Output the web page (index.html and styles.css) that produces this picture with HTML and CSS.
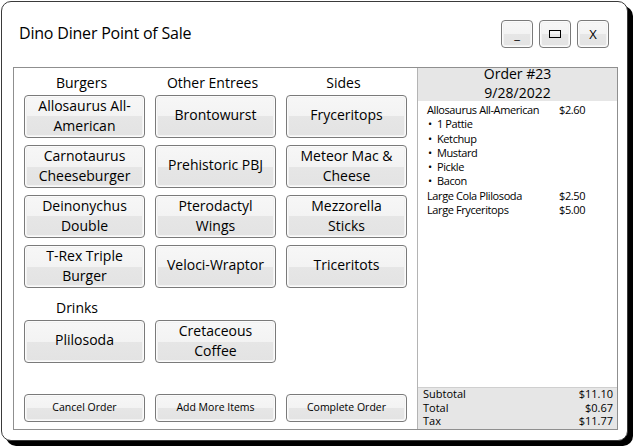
FILE: index.html
```html
<!DOCTYPE html>
<html>
<head>
<meta charset="utf-8">
<link rel="stylesheet" href="styles.css">
</head>
<body>
<div class="window">
  <div class="titlebar">
    <div class="title">Dino Diner Point of Sale</div>
    <div class="wbtns">
      <button class="btn wbtn">_</button>
      <button class="btn wbtn"><span class="max"></span></button>
      <button class="btn wbtn">X</button>
    </div>
  </div>
  <div class="panel">
    <div class="menu">
      <div class="grid">
        <div class="head">Burgers</div>
        <div class="head">Other Entrees</div>
        <div class="head">Sides</div>
        <button class="btn item">Allosaurus All-American</button>
        <button class="btn item">Brontowurst</button>
        <button class="btn item">Fryceritops</button>
        <button class="btn item">Carnotaurus Cheeseburger</button>
        <button class="btn item">Prehistoric PBJ</button>
        <button class="btn item">Meteor Mac &amp; Cheese</button>
        <button class="btn item">Deinonychus Double</button>
        <button class="btn item">Pterodactyl Wings</button>
        <button class="btn item">Mezzorella Sticks</button>
        <button class="btn item">T-Rex Triple Burger</button>
        <button class="btn item">Veloci-Wraptor</button>
        <button class="btn item">Triceritots</button>
        <div class="head drinks">Drinks</div>
        <div></div>
        <div></div>
        <button class="btn item">Plilosoda</button>
        <button class="btn item">Cretaceous Coffee</button>
      </div>
      <div class="actions">
        <button class="btn act">Cancel Order</button>
        <button class="btn act">Add More Items</button>
        <button class="btn act">Complete Order</button>
      </div>
    </div>
    <div class="order">
      <div class="ohead">
        <div class="oline first">Order #23</div>
        <div class="oline">9/28/2022</div>
      </div>
      <div class="items">
        <div class="line"><span>Allosaurus All-American</span><span>$2.60</span></div>
        <div class="line sub"><span>•</span><span>1 Pattie</span></div>
        <div class="line sub"><span>•</span><span>Ketchup</span></div>
        <div class="line sub"><span>•</span><span>Mustard</span></div>
        <div class="line sub"><span>•</span><span>Pickle</span></div>
        <div class="line sub"><span>•</span><span>Bacon</span></div>
        <div class="line"><span>Large Cola Plilosoda</span><span>$2.50</span></div>
        <div class="line"><span>Large Fryceritops</span><span>$5.00</span></div>
      </div>
      <div class="totals">
        <div class="trow first"><span>Subtotal</span><span>$11.10</span></div>
        <div class="trow"><span>Total</span><span>$0.67</span></div>
        <div class="trow"><span>Tax</span><span>$11.77</span></div>
      </div>
    </div>
  </div>
</div>
</body>
</html>
```

FILE: styles.css
```css
* { box-sizing: border-box; }
html, body { margin: 0; padding: 0; background: #fff; }
body {
  font-family: "Open Sans", "Noto Sans", sans-serif;
  color: #000;
  width: 635px;
  height: 447px;
  overflow: hidden;
}
.window {
  margin: 1px 0 0 1px;
  width: 627px;
  height: 440px;
  border: 1px solid #3a3a3a;
  border-radius: 10px;
  box-shadow: 5px 5px 0 #000;
  background: #fff;
  display: flex;
  flex-direction: column;
}
.titlebar {
  height: 65px;
  display: flex;
  align-items: center;
  justify-content: space-between;
  padding: 0 18px 2px 17px;
}
.title {
  font-size: 16px;
  letter-spacing: -0.2px;
  line-height: 20px;
  margin-top: -1px;
}
.wbtns {
  display: flex;
  gap: 6px;
}
.btn {
  font-family: inherit;
  color: #000;
  border: 1px solid #7a7a7a;
  border-radius: 4px;
  background: linear-gradient(#f7f7f7 0, #f3f3f3 50%, #e6e6e6 50%, #e3e3e3 100%);
  box-shadow: inset 0 0 0 1px #fbfbfb, inset 0 0 0 2px #f2f2f2;
  padding: 0;
  margin: 0;
}
.wbtn {
  width: 32px;
  height: 28px;
  font-size: 13px;
  display: flex;
  align-items: center;
  justify-content: center;
}
.max {
  display: block;
  width: 12px;
  height: 8px;
  border: 1px solid #000;
}
.panel {
  margin: 0 0 10px 11px;
  width: 605px;
  flex: 1;
  border: 1px solid #8f8f8f;
  display: flex;
}
.menu {
  width: 403px;
  padding-left: 10px;
  display: flex;
  flex-direction: column;
}
.grid {
  display: grid;
  grid-template-columns: repeat(3, 121px);
  column-gap: 10px;
}
.head {
  height: 27px;
  padding-top: 2px;
  line-height: 25px;
  font-size: 14px;
  text-align: center;
  padding-right: 6px;
}
.head.drinks {
  height: 25px;
  padding-top: 0;
  padding-right: 15px;
}
.item {
  height: 43px;
  margin-bottom: 7px;
  font-size: 14px;
  line-height: 20px;
  padding: 0 8px 3px;
}
.actions {
  margin-top: auto;
  padding-bottom: 7px;
  display: grid;
  grid-template-columns: repeat(3, 121px);
  column-gap: 10px;
}
.act {
  height: 28px;
  font-size: 10.5px;
  padding-bottom: 2px;
}
.order {
  flex: 1;
  border-left: 1px solid #b4b4b4;
  display: flex;
  flex-direction: column;
}
.ohead {
  background: #e6e6e6;
  height: 33px;
  text-align: center;
  font-size: 14px;
  line-height: 19px;
}
.oline.first {
  margin-top: -4px;
}
.items {
  flex: 1;
  padding: 2px 0 0 9px;
  font-size: 11px;
  letter-spacing: -0.4px;
}
.line {
  display: grid;
  grid-template-columns: 132px auto;
  line-height: 14.3px;
}
.line.sub {
  grid-template-columns: 9px auto;
  padding-left: 1px;
}
.totals {
  background: #e6e6e6;
  border-top: 1px solid #cfcfcf;
  height: 42px;
  padding: 0 4px 0 5px;
  font-size: 11px;
}
.trow {
  display: flex;
  justify-content: space-between;
  line-height: 13.5px;
}
.trow.first {
  margin-top: -1px;
}
```
